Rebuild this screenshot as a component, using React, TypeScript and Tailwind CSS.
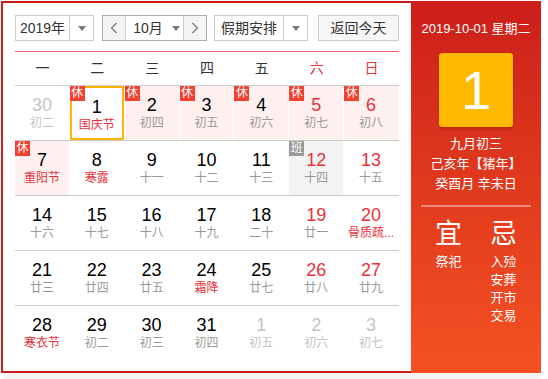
type Day = {
  n: number;
  lunar: string;
  faded?: boolean;
  weekend?: boolean;
  fest?: boolean;
  badge?: "休" | "班";
  pink?: boolean;
  gray?: boolean;
  selected?: boolean;
};

const weeks: Day[][] = [
  [
    { n: 30, lunar: "初二", faded: true },
    { n: 1, lunar: "国庆节", fest: true, badge: "休", selected: true },
    { n: 2, lunar: "初四", badge: "休", pink: true },
    { n: 3, lunar: "初五", badge: "休", pink: true },
    { n: 4, lunar: "初六", badge: "休", pink: true },
    { n: 5, lunar: "初七", badge: "休", pink: true, weekend: true },
    { n: 6, lunar: "初八", badge: "休", pink: true, weekend: true },
  ],
  [
    { n: 7, lunar: "重阳节", fest: true, badge: "休", pink: true },
    { n: 8, lunar: "寒露", fest: true },
    { n: 9, lunar: "十一" },
    { n: 10, lunar: "十二" },
    { n: 11, lunar: "十三" },
    { n: 12, lunar: "十四", badge: "班", gray: true, weekend: true },
    { n: 13, lunar: "十五", weekend: true },
  ],
  [
    { n: 14, lunar: "十六" },
    { n: 15, lunar: "十七" },
    { n: 16, lunar: "十八" },
    { n: 17, lunar: "十九" },
    { n: 18, lunar: "二十" },
    { n: 19, lunar: "廿一", weekend: true },
    { n: 20, lunar: "骨质疏...", fest: true, weekend: true },
  ],
  [
    { n: 21, lunar: "廿三" },
    { n: 22, lunar: "廿四" },
    { n: 23, lunar: "廿五" },
    { n: 24, lunar: "霜降", fest: true },
    { n: 25, lunar: "廿七" },
    { n: 26, lunar: "廿八", weekend: true },
    { n: 27, lunar: "廿九", weekend: true },
  ],
  [
    { n: 28, lunar: "寒衣节", fest: true },
    { n: 29, lunar: "初二" },
    { n: 30, lunar: "初三" },
    { n: 31, lunar: "初四" },
    { n: 1, lunar: "初五", faded: true },
    { n: 2, lunar: "初六", faded: true },
    { n: 3, lunar: "初七", faded: true },
  ],
];

const weekdays = ["一", "二", "三", "四", "五", "六", "日"];

function Caret() {
  return <span className="w-0 h-0 border-l-[4px] border-r-[4px] border-t-[5px] border-l-transparent border-r-transparent border-t-[#777]" />;
}

function Chevron({ dir }: { dir: "l" | "r" }) {
  return (
    <svg width="8" height="12" viewBox="0 0 8 12" fill="none">
      <path d={dir === "l" ? "M6.5 1L1.5 6l5 5" : "M1.5 1l5 5-5 5"} stroke="#777" strokeWidth="1.2" />
    </svg>
  );
}

function Cell({ d }: { d: Day }) {
  const bg = d.pink ? "bg-[#fff0f0]" : d.gray ? "bg-[#f3f3f3]" : "bg-white";
  const numColor = d.faded ? "text-[#c4c4c4]" : d.weekend ? "text-[#e8313a]" : "text-black";
  const lunarColor = d.faded ? "text-[#c4c4c4]" : d.fest ? "text-[#e8313a]" : "text-[#999]";
  return (
    <div className="relative h-[54px] pr-px">
      <div
        className={`h-full flex flex-col items-center pt-[8px] ${bg} ${
          d.selected ? "border-2 border-[#ffb400] pt-[6px]" : ""
        }`}
      >
        <span className={`text-[18px] leading-[22px] ${numColor}`}>{d.n}</span>
        <span className={`text-[12px] leading-[14px] whitespace-nowrap ${lunarColor}`}>{d.lunar}</span>
      </div>
      {d.badge && (
        <span
          className={`absolute left-0 top-0 w-[15px] h-[15px] text-[12px] leading-[15px] text-center text-white ${
            d.badge === "休" ? "bg-[#f4402f]" : "bg-[#999]"
          }`}
        >
          {d.badge}
        </span>
      )}
    </div>
  );
}

export default function App() {
  return (
    <div className="font-['Liberation_Sans','Noto_Sans_CJK_SC',sans-serif] text-[#333]">
      <div className="ml-px mt-px flex w-[540px] h-[372px]">
        {/* calendar */}
        <div className="w-[410px] border-l-2 border-t-2 border-b-2 border-[#cb1b1b] px-3 pt-3">
          <div className="flex items-center h-[26px] text-[14px]">
            <div className="flex w-[79px] h-full border border-[#ccc]">
              <span className="flex-1 flex items-center justify-center">2019年</span>
              <span className="w-[24px] border-l border-[#ccc] flex items-center justify-center">
                <Caret />
              </span>
            </div>
            <div className="ml-[8px] flex w-[105px] h-full border border-[#aaa]">
              <span className="w-[23px] bg-[#f4f4f4] border-r border-[#ccc] flex items-center justify-center">
                <Chevron dir="l" />
              </span>
              <span className="flex-1 flex items-center justify-center gap-[9px] pl-[4px]">
                10月
                <Caret />
              </span>
              <span className="w-[23px] bg-[#f4f4f4] border-l border-[#ccc] flex items-center justify-center">
                <Chevron dir="r" />
              </span>
            </div>
            <div className="ml-[7px] flex w-[94px] h-full border border-[#ccc]">
              <span className="flex-1 flex items-center justify-center">假期安排</span>
              <span className="w-[24px] border-l border-[#ccc] flex items-center justify-center">
                <Caret />
              </span>
            </div>
            <div className="ml-[10px] w-[81px] h-full border border-[#ccc] bg-[#f7f7f7] flex items-center justify-center">
              返回今天
            </div>
          </div>

          <div className="mt-[10px] border-t border-[#ea6a64]" />

          <div className="grid grid-cols-7 h-[33px] text-[14px]">
            {weekdays.map((w, i) => (
              <div key={w} className={`flex items-center justify-center ${i > 4 ? "text-[#e8313a]" : "text-[#333]"}`}>
                {w}
              </div>
            ))}
          </div>

          {weeks.map((row, r) => (
            <div key={r} className="grid grid-cols-7 border-t border-[#ccc] h-[55px]">
              {row.map((d, i) => (
                <Cell key={i} d={d} />
              ))}
            </div>
          ))}
        </div>

        {/* detail panel */}
        <div className="w-[130px] bg-linear-to-b from-[#cc1d1a] to-[#f55123] text-white flex flex-col items-center">
          <div className="mt-[19px] text-[13px] leading-[18px]">2019-10-01 星期二</div>
          <div className="mt-[15px] w-[74px] h-[74px] rounded-[3px] bg-[#ffb900] shadow-[0_2px_3px_rgba(120,30,0,0.35)] flex items-center justify-center text-[54px] leading-none">
            1
          </div>
          <div className="mt-[7px] text-[13px] leading-[20px] text-center">
            <div>九月初三</div>
            <div>己亥年【猪年】</div>
            <div>癸酉月 辛未日</div>
          </div>
          <div className="mt-[11px] w-[110px] h-[2px] bg-[#f08a78]" />
          <div className="mt-[10px] flex w-[110px]">
            <div className="flex-1 flex flex-col items-center">
              <span className="text-[27px] leading-[34px]">宜</span>
              <span className="mt-[2px] text-[13px] leading-[18px]">祭祀</span>
            </div>
            <div className="flex-1 flex flex-col items-center">
              <span className="text-[27px] leading-[34px]">忌</span>
              <div className="mt-[2px] text-[13px] leading-[18px] flex flex-col">
                <span>入殓</span>
                <span>安葬</span>
                <span>开市</span>
                <span>交易</span>
              </div>
            </div>
          </div>
        </div>
      </div>
      <div className="ml-[3px] w-[538px] h-[6px] bg-[#f4f4f4]" />
    </div>
  );
}
